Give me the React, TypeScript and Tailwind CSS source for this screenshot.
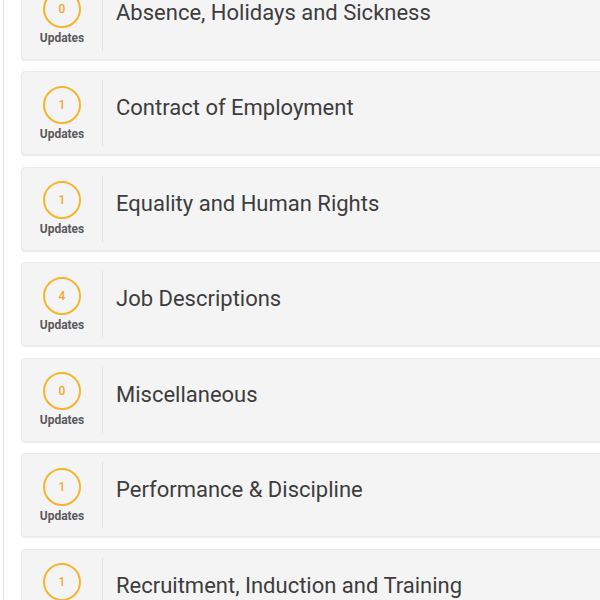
import React from "react";

const items = [
  { n: 0, title: "Absence, Holidays and Sickness" },
  { n: 1, title: "Contract of Employment" },
  { n: 1, title: "Equality and Human Rights" },
  { n: 4, title: "Job Descriptions" },
  { n: 0, title: "Miscellaneous" },
  { n: 1, title: "Performance & Discipline" },
  { n: 1, title: "Recruitment, Induction and Training" },
];

export default function App() {
  return (
    <div
      className="w-[600px] h-[600px] overflow-hidden bg-white"
      style={{ fontFamily: "Roboto, 'Liberation Sans', sans-serif" }}
    >
      <div className="ml-[3px] flex h-full flex-col border-l border-[#e4e4e4] pl-[17px]">
        <div className="-mt-[24.5px] flex w-[640px] flex-col gap-[11.5px]">
          {items.map((it, i) => (
            <div
              key={i}
              className="flex h-[84px] items-center rounded-[4px] border border-[#ebebeb] bg-[#f4f4f4] shadow-[0_1px_1px_rgba(0,0,0,0.08)]"
            >
              <div className="flex w-[80px] shrink-0 flex-col items-center pt-[1px]">
                <div className="flex h-[38px] w-[38px] items-center justify-center rounded-full border-[2.5px] border-[#f5b52e] text-[12px] font-medium text-[#f0a830]">
                  {it.n}
                </div>
                <div className="mt-[2px] text-[12px] font-bold leading-[16px] text-[#5a5a5a]">
                  Updates
                </div>
              </div>
              <div className="h-[66px] w-px bg-[#e3e3e3]" />
              <div className="mb-[10px] pl-[13px] text-[22px] leading-none text-[#3d3d3d]">
                {it.title}
              </div>
            </div>
          ))}
        </div>
      </div>
    </div>
  );
}
